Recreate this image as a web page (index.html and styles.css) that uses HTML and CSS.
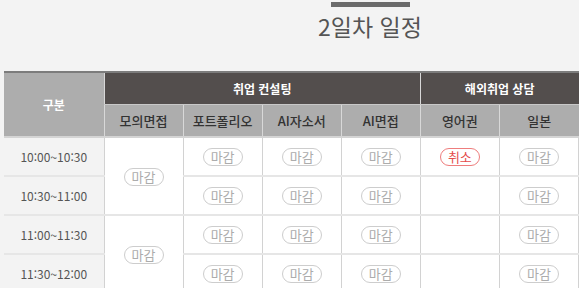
FILE: index.html
```html
<!DOCTYPE html>
<html lang="ko">
<head>
    <meta charset="UTF-8">
    <meta name="viewport" content="width=device-width, initial-scale=1.0">
    <title>2일차 일정</title>
    <link rel="stylesheet" href="styles.css">
</head>
<body>
    <div class="day-title">
        <span class="title-bar"></span>
        <h2>2일차 일정</h2>
    </div>

    <table class="schedule">
        <colgroup>
            <col class="col-time">
            <col><col><col><col><col><col>
        </colgroup>
        <thead>
            <tr class="group-row">
                <th rowspan="2" class="th-time">구분</th>
                <th colspan="4">취업 컨설팅</th>
                <th colspan="2">해외취업 상담</th>
            </tr>
            <tr class="sub-row">
                <th>모의면접</th>
                <th>포트폴리오</th>
                <th>AI자소서</th>
                <th>AI면접</th>
                <th>영어권</th>
                <th>일본</th>
            </tr>
        </thead>
        <tbody>
            <tr>
                <td class="time">10:00~10:30</td>
                <td rowspan="2"><span class="pill">마감</span></td>
                <td><span class="pill">마감</span></td>
                <td><span class="pill">마감</span></td>
                <td><span class="pill">마감</span></td>
                <td><span class="pill cancel">취소</span></td>
                <td><span class="pill">마감</span></td>
            </tr>
            <tr>
                <td class="time">10:30~11:00</td>
                <td><span class="pill">마감</span></td>
                <td><span class="pill">마감</span></td>
                <td><span class="pill">마감</span></td>
                <td></td>
                <td><span class="pill">마감</span></td>
            </tr>
            <tr>
                <td class="time">11:00~11:30</td>
                <td rowspan="2"><span class="pill">마감</span></td>
                <td><span class="pill">마감</span></td>
                <td><span class="pill">마감</span></td>
                <td><span class="pill">마감</span></td>
                <td></td>
                <td><span class="pill">마감</span></td>
            </tr>
            <tr>
                <td class="time">11:30~12:00</td>
                <td><span class="pill">마감</span></td>
                <td><span class="pill">마감</span></td>
                <td><span class="pill">마감</span></td>
                <td></td>
                <td><span class="pill">마감</span></td>
            </tr>
        </tbody>
    </table>
</body>
</html>
```

FILE: styles.css
```css
body {
    font-family: "Noto Sans CJK KR", "Noto Sans", sans-serif;
    margin: 0;
    padding: 2px 0 0 4px;
    background-color: #f3f3f3;
    color: #333;
}
.day-title {
    display: flex;
    flex-direction: column;
    align-items: center;
    padding-left: 157px;
}
.title-bar {
    display: block;
    width: 79px;
    height: 5px;
    background-color: #6b6b6b;
}
.day-title h2 {
    margin: 3px 0 0;
    font-size: 23px;
    font-weight: normal;
    line-height: 32px;
    color: #555;
}
.schedule {
    width: 575px;
    margin-top: 29px;
    border-collapse: collapse;
    table-layout: fixed;
    border-top: 2px solid #7c7c7c;
    font-size: 12px;
    text-align: center;
}
.col-time {
    width: 100px;
}
.schedule th {
    padding: 0;
    font-weight: bold;
}
.group-row th {
    height: 31px;
    background-color: #534e4d;
    color: white;
    border-left: 1px solid #d8d8d8;
    border-bottom: 1px solid #c8c8c8;
}
.group-row .th-time {
    background-color: #adadad;
    border-left: none;
    border-bottom: 2px solid #d4d4d4;
}
.sub-row th {
    height: 31px;
    background-color: #adadad;
    color: #333;
    font-size: 13px;
    font-weight: 500;
    border-left: 1px solid #d8d8d8;
    border-bottom: 2px solid #d4d4d4;
}
.schedule td {
    height: 37px;
    padding: 0;
    background-color: white;
    border-left: 1px solid #d2d2d2;
    border-right: 1px solid #d2d2d2;
    border-bottom: 2px solid #e6e6e6;
}
.schedule td.time {
    background-color: #f3f3f3;
    color: #555;
    font-size: 12px;
    border-left: none;
}
.pill {
    display: inline-block;
    width: 38px;
    height: 16px;
    line-height: 16px;
    border: 1.5px solid #cdcdcd;
    border-radius: 10px;
    color: #acacac;
    font-size: 13px;
    vertical-align: middle;
}
.pill.cancel {
    border-color: #ee7d7d;
    color: #e54b4b;
}
```
